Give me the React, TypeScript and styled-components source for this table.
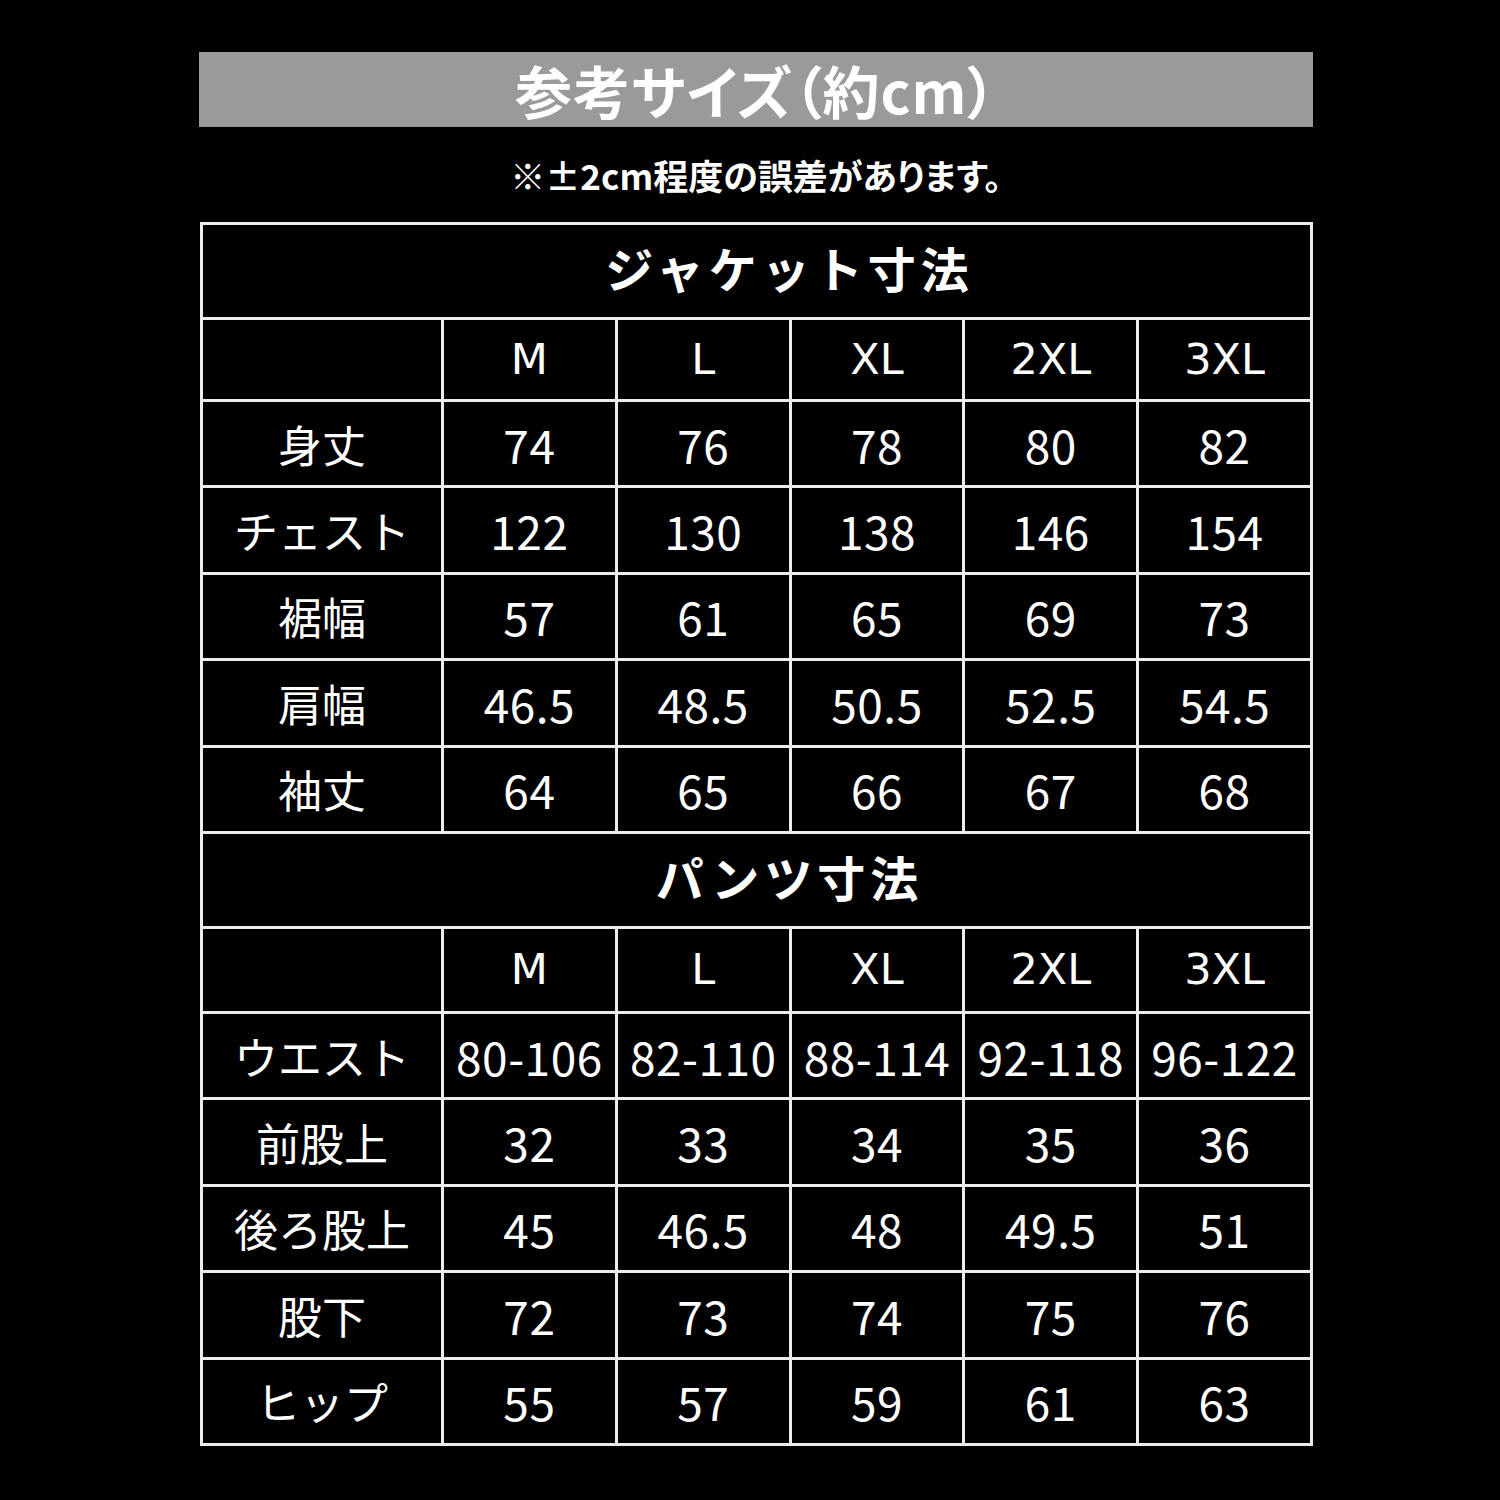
import React from "react";
import styled, { createGlobalStyle } from "styled-components";

const GlobalStyle = createGlobalStyle`
  html, body {
    margin: 0;
    padding: 0;
    background: #000;
  }
  body {
    font-family: "Noto Sans CJK JP", "DejaVu Sans", sans-serif;
    color: #fff;
  }
`;

const Page = styled.div`
  width: 1500px;
  height: 1500px;
  background: #000;
  padding: 52px 0 0 199px;
  box-sizing: border-box;
`;

const Sheet = styled.div`
  width: 1114px;
  display: flex;
  flex-direction: column;
`;

const TitleBar = styled.div`
  height: 75px;
  background: #9a9a9a;
  display: flex;
  align-items: center;
  justify-content: center;
  font-size: 57px;
  font-weight: 700;
  line-height: 1;
  color: #fff;
  font-feature-settings: "palt";
  letter-spacing: 1px;
`;

const Note = styled.div`
  height: 95px;
  display: flex;
  align-items: center;
  justify-content: center;
  font-size: 35px;
  font-weight: 700;
  line-height: 1;
  font-feature-settings: "palt";
`;

const Table = styled.div`
  margin-left: 1px;
  display: grid;
  grid-template-columns: 238px repeat(5, 1fr);
  grid-template-rows: 92px 79px repeat(5, 83.4px) 92px 82px repeat(5, 83.4px);
  gap: 3px;
  padding: 3px;
  background: #ececec;
`;

const Cell = styled.div`
  background: #000;
  display: flex;
  align-items: center;
  justify-content: center;
  font-size: 46px;
  font-weight: 400;
  line-height: 1;
  white-space: nowrap;
  letter-spacing: 0.5px;
`;

const SectionTitle = styled(Cell)`
  grid-column: 1 / -1;
  font-size: 48px;
  font-weight: 700;
  letter-spacing: 5px;
  padding-left: 66px;
  padding-bottom: 8px;
`;

const SizeCell = styled(Cell)`
  font-family: "DejaVu Sans", "Noto Sans CJK JP", sans-serif;
  font-size: 43px;
  letter-spacing: 0;
`;

const LabelCell = styled(Cell)`
  font-size: 44px;
  letter-spacing: 0;
`;

const sizes = ["M", "L", "XL", "2XL", "3XL"];

const jacket: [string, string[]][] = [
  ["身丈", ["74", "76", "78", "80", "82"]],
  ["チェスト", ["122", "130", "138", "146", "154"]],
  ["裾幅", ["57", "61", "65", "69", "73"]],
  ["肩幅", ["46.5", "48.5", "50.5", "52.5", "54.5"]],
  ["袖丈", ["64", "65", "66", "67", "68"]],
];

const pants: [string, string[]][] = [
  ["ウエスト", ["80-106", "82-110", "88-114", "92-118", "96-122"]],
  ["前股上", ["32", "33", "34", "35", "36"]],
  ["後ろ股上", ["45", "46.5", "48", "49.5", "51"]],
  ["股下", ["72", "73", "74", "75", "76"]],
  ["ヒップ", ["55", "57", "59", "61", "63"]],
];

const Section: React.FC<{ title: string; rows: [string, string[]][] }> = ({
  title,
  rows,
}) => (
  <>
    <SectionTitle>{title}</SectionTitle>
    <SizeCell />
    {sizes.map((s) => (
      <SizeCell key={s}>{s}</SizeCell>
    ))}
    {rows.map(([label, values]) => (
      <React.Fragment key={label}>
        <LabelCell>{label}</LabelCell>
        {values.map((v, i) => (
          <Cell key={i}>{v}</Cell>
        ))}
      </React.Fragment>
    ))}
  </>
);

const App: React.FC = () => {
  return (
    <Page>
      <GlobalStyle />
      <Sheet>
        <TitleBar>参考サイズ（約cm）</TitleBar>
        <Note>※±2cm程度の誤差があります。</Note>
        <Table>
          <Section title="ジャケット寸法" rows={jacket} />
          <Section title="パンツ寸法" rows={pants} />
        </Table>
      </Sheet>
    </Page>
  );
};

export default App;
